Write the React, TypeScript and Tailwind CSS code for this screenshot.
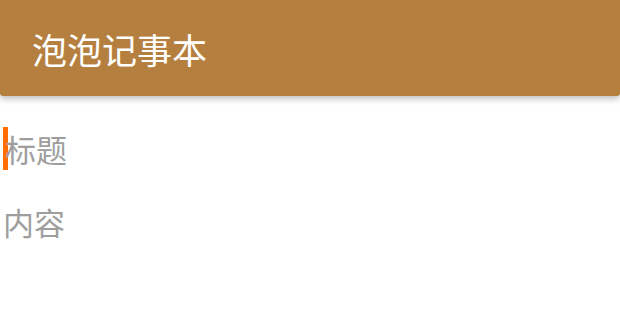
export default function App() {
  const font = { fontFamily: '"Noto Sans CJK SC", "Noto Sans", sans-serif' };
  return (
    <div className="w-[620px] h-[334px] bg-white overflow-hidden flex flex-col" style={font}>
      {/* toolbar */}
      <div className="h-[96px] bg-[#b5803f] flex items-center pl-[32px] shadow-[0_3px_6px_rgba(0,0,0,0.25)] rounded-b-[3px] relative z-10">
        <span className="text-[35px] leading-none text-white">泡泡记事本</span>
      </div>

      {/* editor */}
      <div className="flex flex-col pt-[30px] pl-[3px]">
        <div className="flex items-center h-[44px]">
          <div className="w-[5px] h-[43px] bg-[#ff6d00] -mr-[3px]" />
          <span className="text-[31px] leading-none text-[#9e9e9e]">标题</span>
        </div>
        <div className="flex items-center h-[44px] mt-[29px]">
          <span className="text-[31px] leading-none text-[#9e9e9e]">内容</span>
        </div>
      </div>
    </div>
  );
}
